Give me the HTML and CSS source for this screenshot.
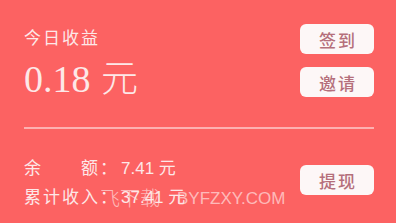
FILE: index.html
```html
<!DOCTYPE html>
<html lang="zh-CN">
<head>
<meta charset="utf-8">
<link rel="stylesheet" href="styles.css">
</head>
<body>
<div class="card">
  <section class="top">
    <div class="today">
      <div class="title">今日收益</div>
      <div class="amount"><span class="num">0.18</span> <span class="unit">元</span></div>
    </div>
    <div class="actions">
      <div class="btn">签到</div>
      <div class="btn">邀请</div>
    </div>
  </section>
  <div class="divider"></div>
  <section class="bottom">
    <div class="rows">
      <div class="row"><span class="label"><span>余</span><span>额</span></span><span class="colon">：</span><span class="val">7.41 元</span></div>
      <div class="row"><span class="label"><span>累</span><span>计</span><span>收</span><span>入</span></span><span class="colon">：</span><span class="val">37.41 元</span></div>
    </div>
    <div class="btn">提现</div>
  </section>
  <div class="watermark"><span class="wm-cn">飞下载</span><span class="wm-en">BYFZXY.COM</span></div>
</div>
</body>
</html>
```

FILE: styles.css
```css
html, body {
  margin: 0;
  padding: 0;
}
body {
  width: 396px;
  height: 223px;
  background: #fc6262;
  overflow: hidden;
  font-family: "Noto Sans CJK SC", "Liberation Sans", sans-serif;
}
.card {
  position: relative;
  width: 396px;
  height: 223px;
  box-sizing: border-box;
  padding: 24px 22px 0 24px;
  color: #fde8e8;
}
.top {
  display: flex;
  justify-content: space-between;
  align-items: flex-start;
}
.title {
  font-size: 17px;
  line-height: 26px;
  letter-spacing: 2px;
}
.amount {
  margin-top: 6px;
  line-height: 40px;
  font-size: 38px;
  white-space: nowrap;
}
.num {
  font-family: "Liberation Serif", serif;
}
.unit {
  font-family: "Noto Sans CJK SC", sans-serif;
  font-size: 37px;
  font-weight: 300;
  margin-left: 2px;
}
.actions {
  display: flex;
  flex-direction: column;
  gap: 13px;
}
.btn {
  width: 74px;
  height: 30px;
  box-sizing: border-box;
  background: #fdf7f7;
  border-radius: 6px;
  color: #b56f7b;
  font-size: 17px;
  font-weight: 500;
  letter-spacing: 2px;
  text-indent: 2px;
  display: flex;
  align-items: center;
  justify-content: center;
}
.divider {
  height: 2px;
  background: #fdb0b0;
  margin-top: 28px;
}
.bottom {
  display: flex;
  justify-content: space-between;
  align-items: center;
  padding-top: 21px;
}
.rows {
  margin-top: 2px;
}
.row {
  display: flex;
  align-items: center;
  height: 29px;
  font-size: 17px;
  white-space: nowrap;
}
.label {
  display: inline-flex;
  justify-content: space-between;
  width: 76px;
}
.label span {
  width: 19px;
}
.colon {
  width: 21px;
}
.val {
  font-family: "Liberation Sans", "Noto Sans CJK SC", sans-serif;
}
.watermark {
  position: absolute;
  left: 100px;
  top: 183px;
  display: flex;
  align-items: center;
  color: rgba(255, 225, 225, 0.7);
  white-space: nowrap;
}
.wm-cn {
  font-size: 20px;
  font-weight: 300;
  line-height: 28px;
}
.wm-en {
  margin-left: 17px;
  font-family: "Liberation Sans", sans-serif;
  font-size: 17px;
  line-height: 28px;
  margin-top: 2px;
}
```
